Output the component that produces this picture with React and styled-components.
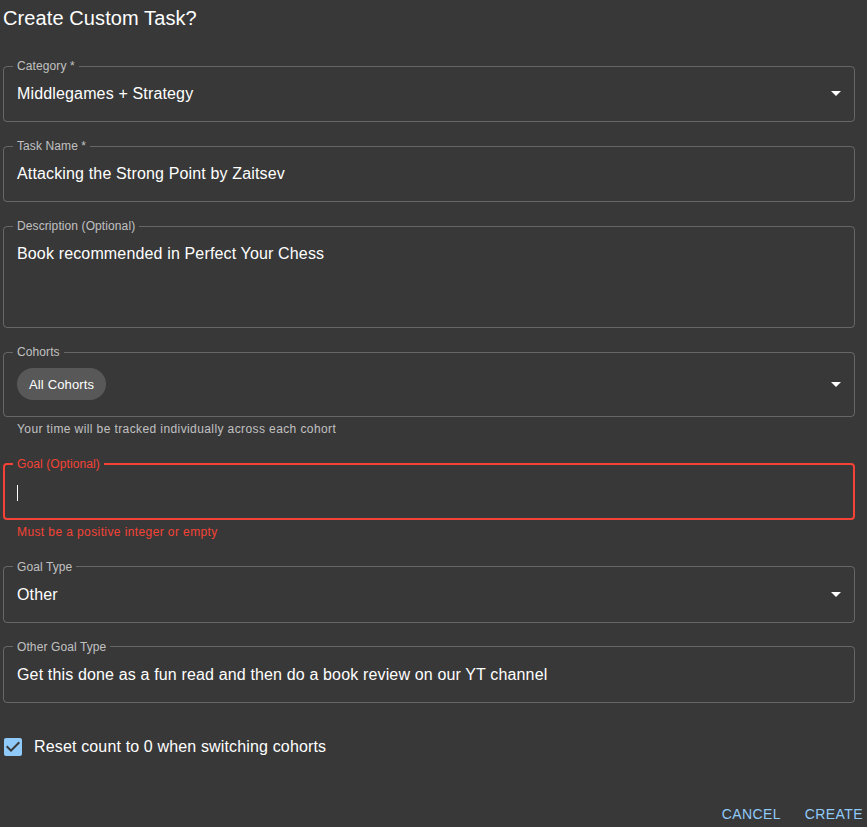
import styled, { createGlobalStyle } from "styled-components";

const GlobalStyle = createGlobalStyle`
  *, *::before, *::after {
    box-sizing: border-box;
  }
  html, body {
    margin: 0;
    padding: 0;
    overflow: hidden;
    background: #383838;
  }
  body {
    font-family: "Liberation Sans", Arial, sans-serif;
    color: #fff;
  }
`;

const ERROR = "#f44336";
const MUTED = "rgba(255, 255, 255, 0.7)";

const Page = styled.div`
  min-height: 827px;
  padding: 2px 12px 0 3px;
  background: #383838;
`;

const Title = styled.h2`
  margin: 0 0 26px;
  font-size: 20px;
  font-weight: 500;
  line-height: 32px;
  letter-spacing: 0.1px;
  color: #fff;
`;

const Form = styled.div`
  display: flex;
  flex-direction: column;
  gap: 18px;
`;

const Group = styled.div`
  display: flex;
  flex-direction: column;
`;

const Outline = styled.fieldset`
  margin: 0;
  min-width: 0;
  border-radius: 4px;
  border: ${(p) => (p.$error ? `2px solid ${ERROR}` : "1px solid rgba(255, 255, 255, 0.23)")};
  padding: ${(p) => (p.$error ? "0 5px 5px 8px" : "0 6px 6px 9px")};
`;

const Legend = styled.legend`
  padding: 0 4px;
  font-size: 12px;
  line-height: 12px;
  letter-spacing: 0.1px;
  color: ${(p) => (p.$error ? ERROR : MUTED)};
`;

const InputRow = styled.div`
  display: flex;
  align-items: ${(p) => (p.$lines > 1 ? "flex-start" : "center")};
  min-height: ${(p) => 20 + (p.$lines || 1) * 23}px;
  padding: 10px 0 10px 4px;
  font-size: 16px;
  line-height: 23px;
  letter-spacing: 0.15px;
  color: #fff;
`;

const Value = styled.span`
  flex: 1;
  white-space: nowrap;
`;

const Caret = styled.span`
  display: inline-block;
  width: 1px;
  height: 16px;
  background: #fff;
  vertical-align: middle;
`;

const Arrow = styled.svg`
  flex: none;
  width: 24px;
  height: 24px;
  margin: -1px 0 0 auto;
  fill: #fff;
`;

const Chip = styled.span`
  display: inline-flex;
  align-items: center;
  height: 32px;
  padding: 0 12px;
  border-radius: 16px;
  background: rgba(255, 255, 255, 0.16);
  font-size: 13px;
  line-height: 1;
  letter-spacing: 0.15px;
  color: #fff;
`;

const Helper = styled.p`
  margin: 3px 14px 0;
  font-size: 12px;
  line-height: 1.66;
  letter-spacing: 0.4px;
  color: ${(p) => (p.$error ? ERROR : MUTED)};
`;

const CheckRow = styled.label`
  display: flex;
  align-items: center;
  margin: 5px 0 0 -11px;
  font-size: 16px;
  line-height: 1.5;
  letter-spacing: 0.15px;
  color: #fff;
`;

const CheckBox = styled.span`
  display: flex;
  padding: 9px;
  svg {
    width: 24px;
    height: 24px;
    fill: #90caf9;
  }
`;

const Actions = styled.div`
  display: flex;
  justify-content: flex-end;
  gap: 8px;
  margin: 28px -16px 0 0;
`;

const TextButton = styled.button`
  min-width: 64px;
  padding: 6px 8px;
  border: 0;
  border-radius: 4px;
  background: transparent;
  font-family: inherit;
  font-size: 14px;
  font-weight: 500;
  line-height: 1.75;
  letter-spacing: 0.4px;
  text-transform: uppercase;
  color: #90caf9;
  cursor: pointer;
`;

const DropArrow = () => (
  <Arrow viewBox="0 0 24 24">
    <path d="M7 10l5 5 5-5z" />
  </Arrow>
);

const Field = ({ label, error, helper, select, lines, children }) => (
  <Group>
    <Outline $error={error}>
      <Legend $error={error}>{label}</Legend>
      <InputRow $lines={lines}>
        <Value>{children}</Value>
        {select && <DropArrow />}
      </InputRow>
    </Outline>
    {helper && <Helper $error={error}>{helper}</Helper>}
  </Group>
);

const App = () => {
  return (
    <Page>
      <GlobalStyle />
      <Title>Create Custom Task?</Title>
      <Form>
        <Field label="Category *" select>
          Middlegames + Strategy
        </Field>
        <Field label="Task Name *">Attacking the Strong Point by Zaitsev</Field>
        <Field label="Description (Optional)" lines={3}>
          Book recommended in Perfect Your Chess
        </Field>
        <Field
          label="Cohorts"
          select
          helper="Your time will be tracked individually across each cohort"
        >
          <Chip>All Cohorts</Chip>
        </Field>
        <Field
          label="Goal (Optional)"
          error
          helper="Must be a positive integer or empty"
        >
          <Caret />
        </Field>
        <Field label="Goal Type" select>
          Other
        </Field>
        <Field label="Other Goal Type">
          Get this done as a fun read and then do a book review on our YT channel
        </Field>
        <CheckRow>
          <CheckBox>
            <svg viewBox="0 0 24 24">
              <path d="M19 3H5c-1.11 0-2 .9-2 2v14c0 1.1.89 2 2 2h14c1.11 0 2-.9 2-2V5c0-1.1-.89-2-2-2zm-9 14l-5-5 1.41-1.41L10 14.17l7.59-7.59L19 8l-9 9z" />
            </svg>
          </CheckBox>
          Reset count to 0 when switching cohorts
        </CheckRow>
      </Form>
      <Actions>
        <TextButton>Cancel</TextButton>
        <TextButton>Create</TextButton>
      </Actions>
    </Page>
  );
};

export default App;
